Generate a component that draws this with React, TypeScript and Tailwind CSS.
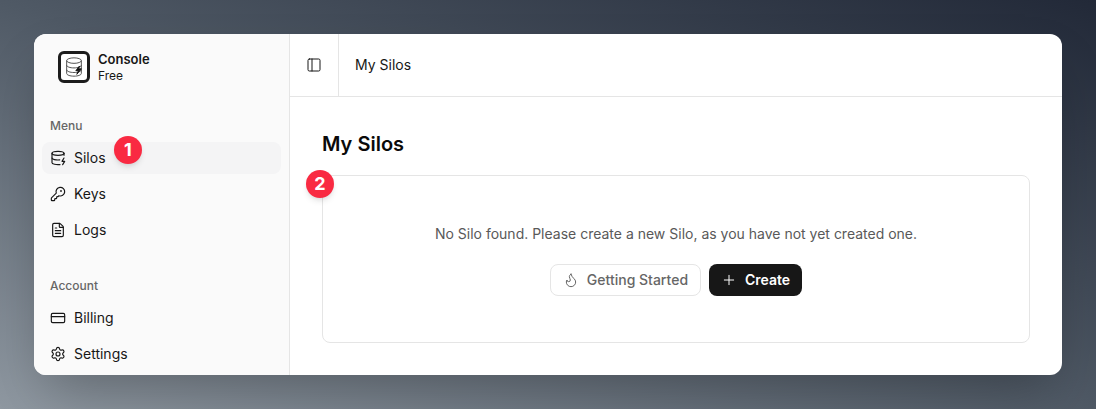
import { CreditCard, DatabaseZap, FileText, Flame, KeyRound, PanelLeft, Plus, Settings } from 'lucide-react'

const menu = [
  { label: 'Silos', icon: DatabaseZap, active: true },
  { label: 'Keys', icon: KeyRound },
  { label: 'Logs', icon: FileText },
]

const account = [
  { label: 'Billing', icon: CreditCard },
  { label: 'Settings', icon: Settings },
]

function Logo() {
  return (
    <div className="flex h-8 w-8 items-center justify-center rounded-[6px] border-[3px] border-[#1c1c1c] bg-white">
      <svg viewBox="0 0 24 24" className="h-[22px] w-[22px]" fill="none" stroke="#444" strokeWidth="1">
        <ellipse cx="12" cy="5" rx="8" ry="3" />
        <path d="M4 5v14c0 1.7 3.6 3 8 3s8-1.300 8-3V5" />
        <path d="M4 10c0 1.700 3.600 3 8 3s8-1.300 8-3" />
        <path d="M4 15c0 1.700 3.600 3 8 3s8-1.300 8-3" />
        <path d="M18 11l-4 5h3l-2 4 5-6h-3l1-3z" fill="#111" stroke="#111" />
      </svg>
    </div>
  )
}

function NavItem({ label, icon: Icon, active }: { label: string; icon: typeof Plus; active?: boolean }) {
  return (
    <div className={`flex h-8 items-center gap-2 rounded-lg px-2 text-sm text-[#171717] ${active ? 'bg-[#f4f4f5]' : ''}`}>
      <Icon size={16} strokeWidth={1.75} />
      <span>{label}</span>
    </div>
  )
}

function Badge({ n, className }: { n: number; className: string }) {
  return (
    <div className={`absolute flex h-7 w-7 items-center justify-center rounded-full bg-[#f92a42] text-lg font-bold text-white shadow-md ${className}`}>
      {n}
    </div>
  )
}

export default function App() {
  return (
    <div className="h-[409px] w-[1096px] overflow-hidden bg-gradient-to-tr from-[#8f98a1] via-[#4f5965] to-[#222938] p-[34px] font-['Inter',sans-serif]">
      <div className="flex h-[341px] overflow-hidden rounded-xl bg-white shadow-2xl">
        <aside className="relative flex w-[256px] shrink-0 flex-col border-r border-[#e5e5e5] bg-[#fafafa] px-2">
          <div className="flex items-center gap-2 pl-4 pt-4">
            <Logo />
            <div className="flex flex-col">
              <span className="text-[13px] font-semibold leading-[18px] text-[#171717]">Console</span>
              <span className="text-xs leading-[16px] text-[#171717]">Free</span>
            </div>
          </div>
          <div className="mt-[26px] flex h-8 items-center px-2 text-xs font-medium text-[#666]">Menu</div>
          <div className="flex flex-col gap-1">
            {menu.map((item) => (
              <NavItem key={item.label} {...item} />
            ))}
          </div>
          <div className="mt-[24px] flex h-8 items-center px-2 text-xs font-medium text-[#666]">Account</div>
          <div className="flex flex-col gap-1">
            {account.map((item) => (
              <NavItem key={item.label} {...item} />
            ))}
          </div>
          <Badge n={1} className="left-[80px] top-[102px]" />
        </aside>
        <main className="flex flex-1 flex-col">
          <header className="flex h-[63px] items-stretch border-b border-[#e5e5e5]">
            <div className="flex w-[49px] items-center justify-center border-r border-[#e5e5e5]">
              <PanelLeft size={16} strokeWidth={1.5} className="text-[#171717]" />
            </div>
            <div className="flex items-center pl-4 text-sm text-[#171717]">My Silos</div>
          </header>
          <div className="relative flex flex-1 flex-col px-8 pb-8 pt-[33px]">
            <h1 className="text-xl font-semibold leading-[28px] text-[#0a0a0a]">My Silos</h1>
            <div className="mt-[17px] flex flex-1 flex-col items-center rounded-lg border border-[#e5e5e5] pt-[48px]">
              <p className="text-sm leading-5 text-[#595959]">No Silo found. Please create a new Silo, as you have not yet created one.</p>
              <div className="mt-5 flex gap-2">
                <button className="flex h-8 items-center gap-2 rounded-lg border border-[#e5e5e5] bg-white px-3 text-sm font-medium text-[#666]">
                  <Flame size={16} strokeWidth={1.5} />
                  Getting Started
                </button>
                <button className="flex h-8 items-center gap-2 rounded-lg bg-[#171717] px-3 text-sm font-semibold text-white">
                  <Plus size={16} strokeWidth={1.5} />
                  Create
                </button>
              </div>
            </div>
            <Badge n={2} className="left-[16px] top-[73px]" />
          </div>
        </main>
      </div>
    </div>
  )
}
